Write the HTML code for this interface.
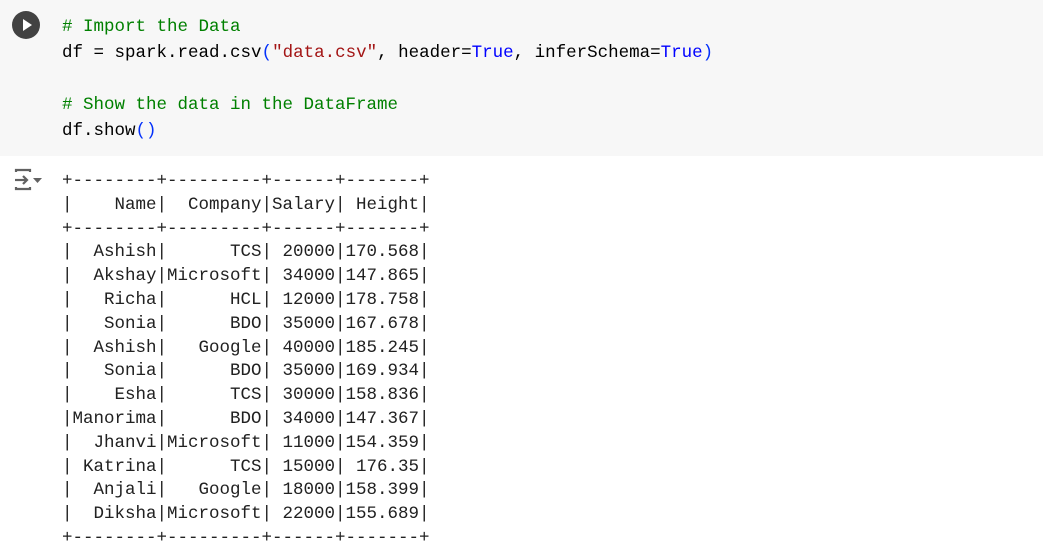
<!DOCTYPE html>
<html><head><style>
body{margin:0;width:1043px;height:552px;background:#fff;overflow:hidden;font-family:"Liberation Mono",monospace;}
.code{position:absolute;left:0;top:0;width:1043px;height:156px;background:#f7f7f7;}
pre{margin:0;font-family:"Liberation Mono",monospace;font-size:17.5px;}
.c1{position:absolute;left:62px;top:14px;line-height:26px;color:#000;}
.out{position:absolute;left:62px;top:170px;line-height:23.8px;color:#212121;}
.cm{color:#008000}.st{color:#a31515}.kw{color:#0000ff}.pa{color:#0431fa}
.play{position:absolute;left:12px;top:11px;width:28px;height:28px;border-radius:50%;background:#424242;}
.play:after{content:"";position:absolute;left:11px;top:8px;border-left:9px solid #fff;border-top:6px solid transparent;border-bottom:6px solid transparent;}
</style></head><body>
<div class="code"></div>
<div class="play"></div>
<pre class="c1"><span class="cm"># Import the Data</span>
df = spark.read.csv<span class="pa">(</span><span class="st">"data.csv"</span>, header=<span class="kw">True</span>, inferSchema=<span class="kw">True</span><span class="pa">)</span>

<span class="cm"># Show the data in the DataFrame</span>
df.show<span class="pa">()</span></pre>
<svg style="position:absolute;left:12px;top:167px" width="34" height="26" viewBox="0 0 34 26">
<g fill="none" stroke="#616161" stroke-width="2.2">
<path d="M4 5V3h14v2"/><path d="M4 20v2h14v-2"/><path d="M3 13h12"/><path d="M11 9l4 4-4 4"/>
</g><path d="M21 11h9l-4.5 5z" fill="#616161"/>
</svg>
<pre class="out">+--------+---------+------+-------+
|    Name|  Company|Salary| Height|
+--------+---------+------+-------+
|  Ashish|      TCS| 20000|170.568|
|  Akshay|Microsoft| 34000|147.865|
|   Richa|      HCL| 12000|178.758|
|   Sonia|      BDO| 35000|167.678|
|  Ashish|   Google| 40000|185.245|
|   Sonia|      BDO| 35000|169.934|
|    Esha|      TCS| 30000|158.836|
|Manorima|      BDO| 34000|147.367|
|  Jhanvi|Microsoft| 11000|154.359|
| Katrina|      TCS| 15000| 176.35|
|  Anjali|   Google| 18000|158.399|
|  Diksha|Microsoft| 22000|155.689|
+--------+---------+------+-------+</pre>
</body></html>
